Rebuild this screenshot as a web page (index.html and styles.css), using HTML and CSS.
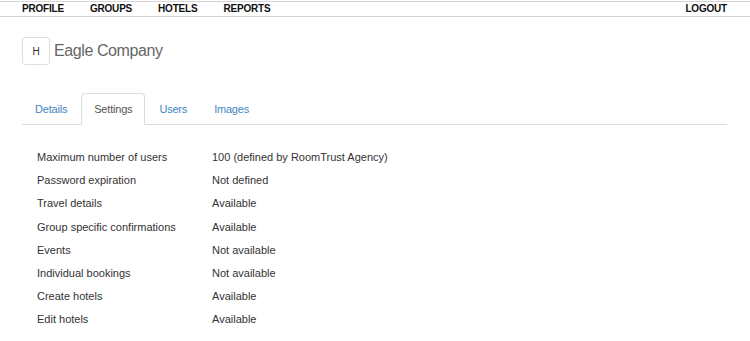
FILE: index.html
```html
<!DOCTYPE html>
<html>
<head>
<meta charset="utf-8">
<link rel="stylesheet" href="styles.css">
</head>
<body>
<nav class="topnav">
  <div class="nav-left">
    <a class="nav-link">PROFILE</a>
    <a class="nav-link">GROUPS</a>
    <a class="nav-link">HOTELS</a>
    <a class="nav-link">REPORTS</a>
  </div>
  <a class="nav-link">LOGOUT</a>
</nav>
<main class="page">
  <header class="company">
    <div class="avatar">H</div>
    <h1 class="company-name">Eagle Company</h1>
  </header>
  <ul class="tabs">
    <li class="tab">Details</li>
    <li class="tab active">Settings</li>
    <li class="tab">Users</li>
    <li class="tab">Images</li>
  </ul>
  <div class="settings">
    <div class="row"><span class="label">Maximum number of users</span><span class="value">100 (defined by RoomTrust Agency)</span></div>
    <div class="row"><span class="label">Password expiration</span><span class="value">Not defined</span></div>
    <div class="row"><span class="label">Travel details</span><span class="value">Available</span></div>
    <div class="row"><span class="label">Group specific confirmations</span><span class="value">Available</span></div>
    <div class="row"><span class="label">Events</span><span class="value">Not available</span></div>
    <div class="row"><span class="label">Individual bookings</span><span class="value">Not available</span></div>
    <div class="row"><span class="label">Create hotels</span><span class="value">Available</span></div>
    <div class="row"><span class="label">Edit hotels</span><span class="value">Available</span></div>
  </div>
</main>
</body>
</html>
```
FILE: styles.css
```css
html, body {
  margin: 0;
  padding: 0;
  background: #fff;
  font-family: "Liberation Sans", Arial, sans-serif;
  color: #333;
}
.topnav {
  margin-top: 1px;
  height: 14px;
  border-top: 1px solid #d4d4d4;
  border-bottom: 1px solid #d4d4d4;
  display: flex;
  justify-content: space-between;
  align-items: center;
  padding: 0 23px 0 22px;
}
.nav-left {
  display: flex;
  gap: 26px;
}
.nav-link {
  font-size: 10px;
  font-weight: bold;
  letter-spacing: -0.2px;
  color: #111;
  line-height: 14px;
}
.page {
  padding: 0 23px 0 22px;
}
.company {
  display: flex;
  align-items: center;
  margin-top: 20px;
  gap: 4px;
}
.avatar {
  width: 26px;
  height: 26px;
  border: 1px solid #ddd;
  border-radius: 3px;
  display: flex;
  align-items: center;
  justify-content: center;
  font-size: 10px;
  color: #333;
}
.company-name {
  margin: 0;
  font-size: 16px;
  letter-spacing: -0.4px;
  font-weight: normal;
  color: #666;
}
.tabs {
  list-style: none;
  margin: 28px 0 0;
  padding: 0;
  display: flex;
  border-bottom: 1px solid #ddd;
}
.tab {
  font-size: 11px;
  letter-spacing: -0.2px;
  line-height: 16px;
  padding: 7px 12px;
  margin-right: 1px;
  margin-bottom: -1px;
  color: #3f86c4;
  border: 1px solid transparent;
  border-radius: 4px 4px 0 0;
}
.tab.active {
  color: #555;
  border-color: #ddd;
  border-bottom-color: #fff;
  background: #fff;
}
.settings {
  padding: 25px 0 0 15px;
}
.row {
  display: flex;
  font-size: 11px;
  line-height: 14px;
  height: 23.2px;
}
.label {
  width: 175px;
}
```
